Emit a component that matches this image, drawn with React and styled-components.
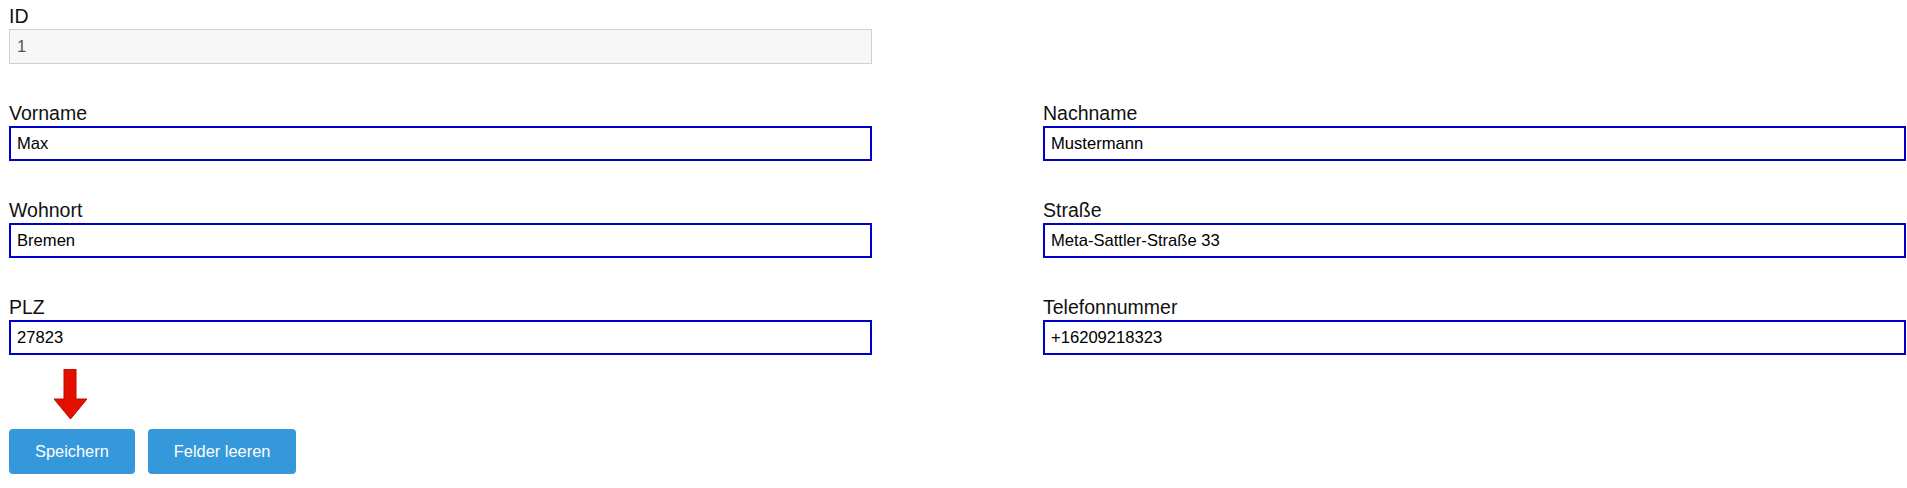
import React from 'react'
import styled, { createGlobalStyle } from 'styled-components'

const GlobalStyle = createGlobalStyle`
    body {
        margin: 0;
        background: #fff;
        font-family: "Liberation Sans", Arial, sans-serif;
    }
`;

const Page = styled.div`
    padding: 6px 0 0 9px;
`;

const Form = styled.div`
    display: grid;
    grid-template-columns: 863px 863px;
    column-gap: 171px;
    row-gap: 39px;
`;

const Field = styled.div`
    display: flex;
    flex-direction: column;
`;

const Label = styled.label`
    font-size: 19.5px;
    line-height: 21px;
    color: #111;
    margin-bottom: 2px;
`;

const Input = styled.input`
    box-sizing: border-box;
    width: 100%;
    height: 35px;
    margin: 0;
    font-family: "Liberation Sans", Arial, sans-serif;
    font-size: 16.6px;
    color: ${props => props.readOnly ? "#555" : "#000"};
    background: ${props => props.readOnly ? "#f7f7f7" : "#fff"};
    border: ${props => props.readOnly ? "1px solid #d0d0d0" : "2px solid #0000cc"};
    padding: 0 ${props => props.readOnly ? "7px" : "6px"};
    outline: none;
`;

const Actions = styled.div`
    margin-top: 14px;
    display: flex;
    flex-direction: column;
`;

const Arrow = styled.svg`
    display: block;
    margin-left: 45px;
    margin-bottom: 10px;
`;

const ButtonRow = styled.div`
    display: flex;
    gap: 13px;
`;

const Button = styled.button`
    height: 45px;
    padding: 0 26px;
    border: none;
    border-radius: 4px;
    background: #3498db;
    color: #fff;
    font-family: "Liberation Sans", Arial, sans-serif;
    font-size: 16.4px;
    cursor: pointer;
`;

const fields = [
    ["Vorname", "Max"],
    ["Nachname", "Mustermann"],
    ["Wohnort", "Bremen"],
    ["Straße", "Meta-Sattler-Straße 33"],
    ["PLZ", "27823"],
    ["Telefonnummer", "+16209218323"],
];

const App = () => {
    return (
        <Page>
            <GlobalStyle/>
            <Form>
                <Field>
                    <Label>ID</Label>
                    <Input readOnly defaultValue="1"/>
                </Field>
                <div/>
                {fields.map(([label, value]) => (
                    <Field key={label}>
                        <Label>{label}</Label>
                        <Input defaultValue={value}/>
                    </Field>
                ))}
            </Form>
            <Actions>
                <Arrow width="33" height="50" viewBox="0 0 33 50">
                    <path d="M10 0 H22 V30 H33 L16.5 50 L0 30 H10 Z" fill="#e31000" stroke="#b80c00" strokeWidth="1"/>
                </Arrow>
                <ButtonRow>
                    <Button>Speichern</Button>
                    <Button>Felder leeren</Button>
                </ButtonRow>
            </Actions>
        </Page>
    )
}

export default App
